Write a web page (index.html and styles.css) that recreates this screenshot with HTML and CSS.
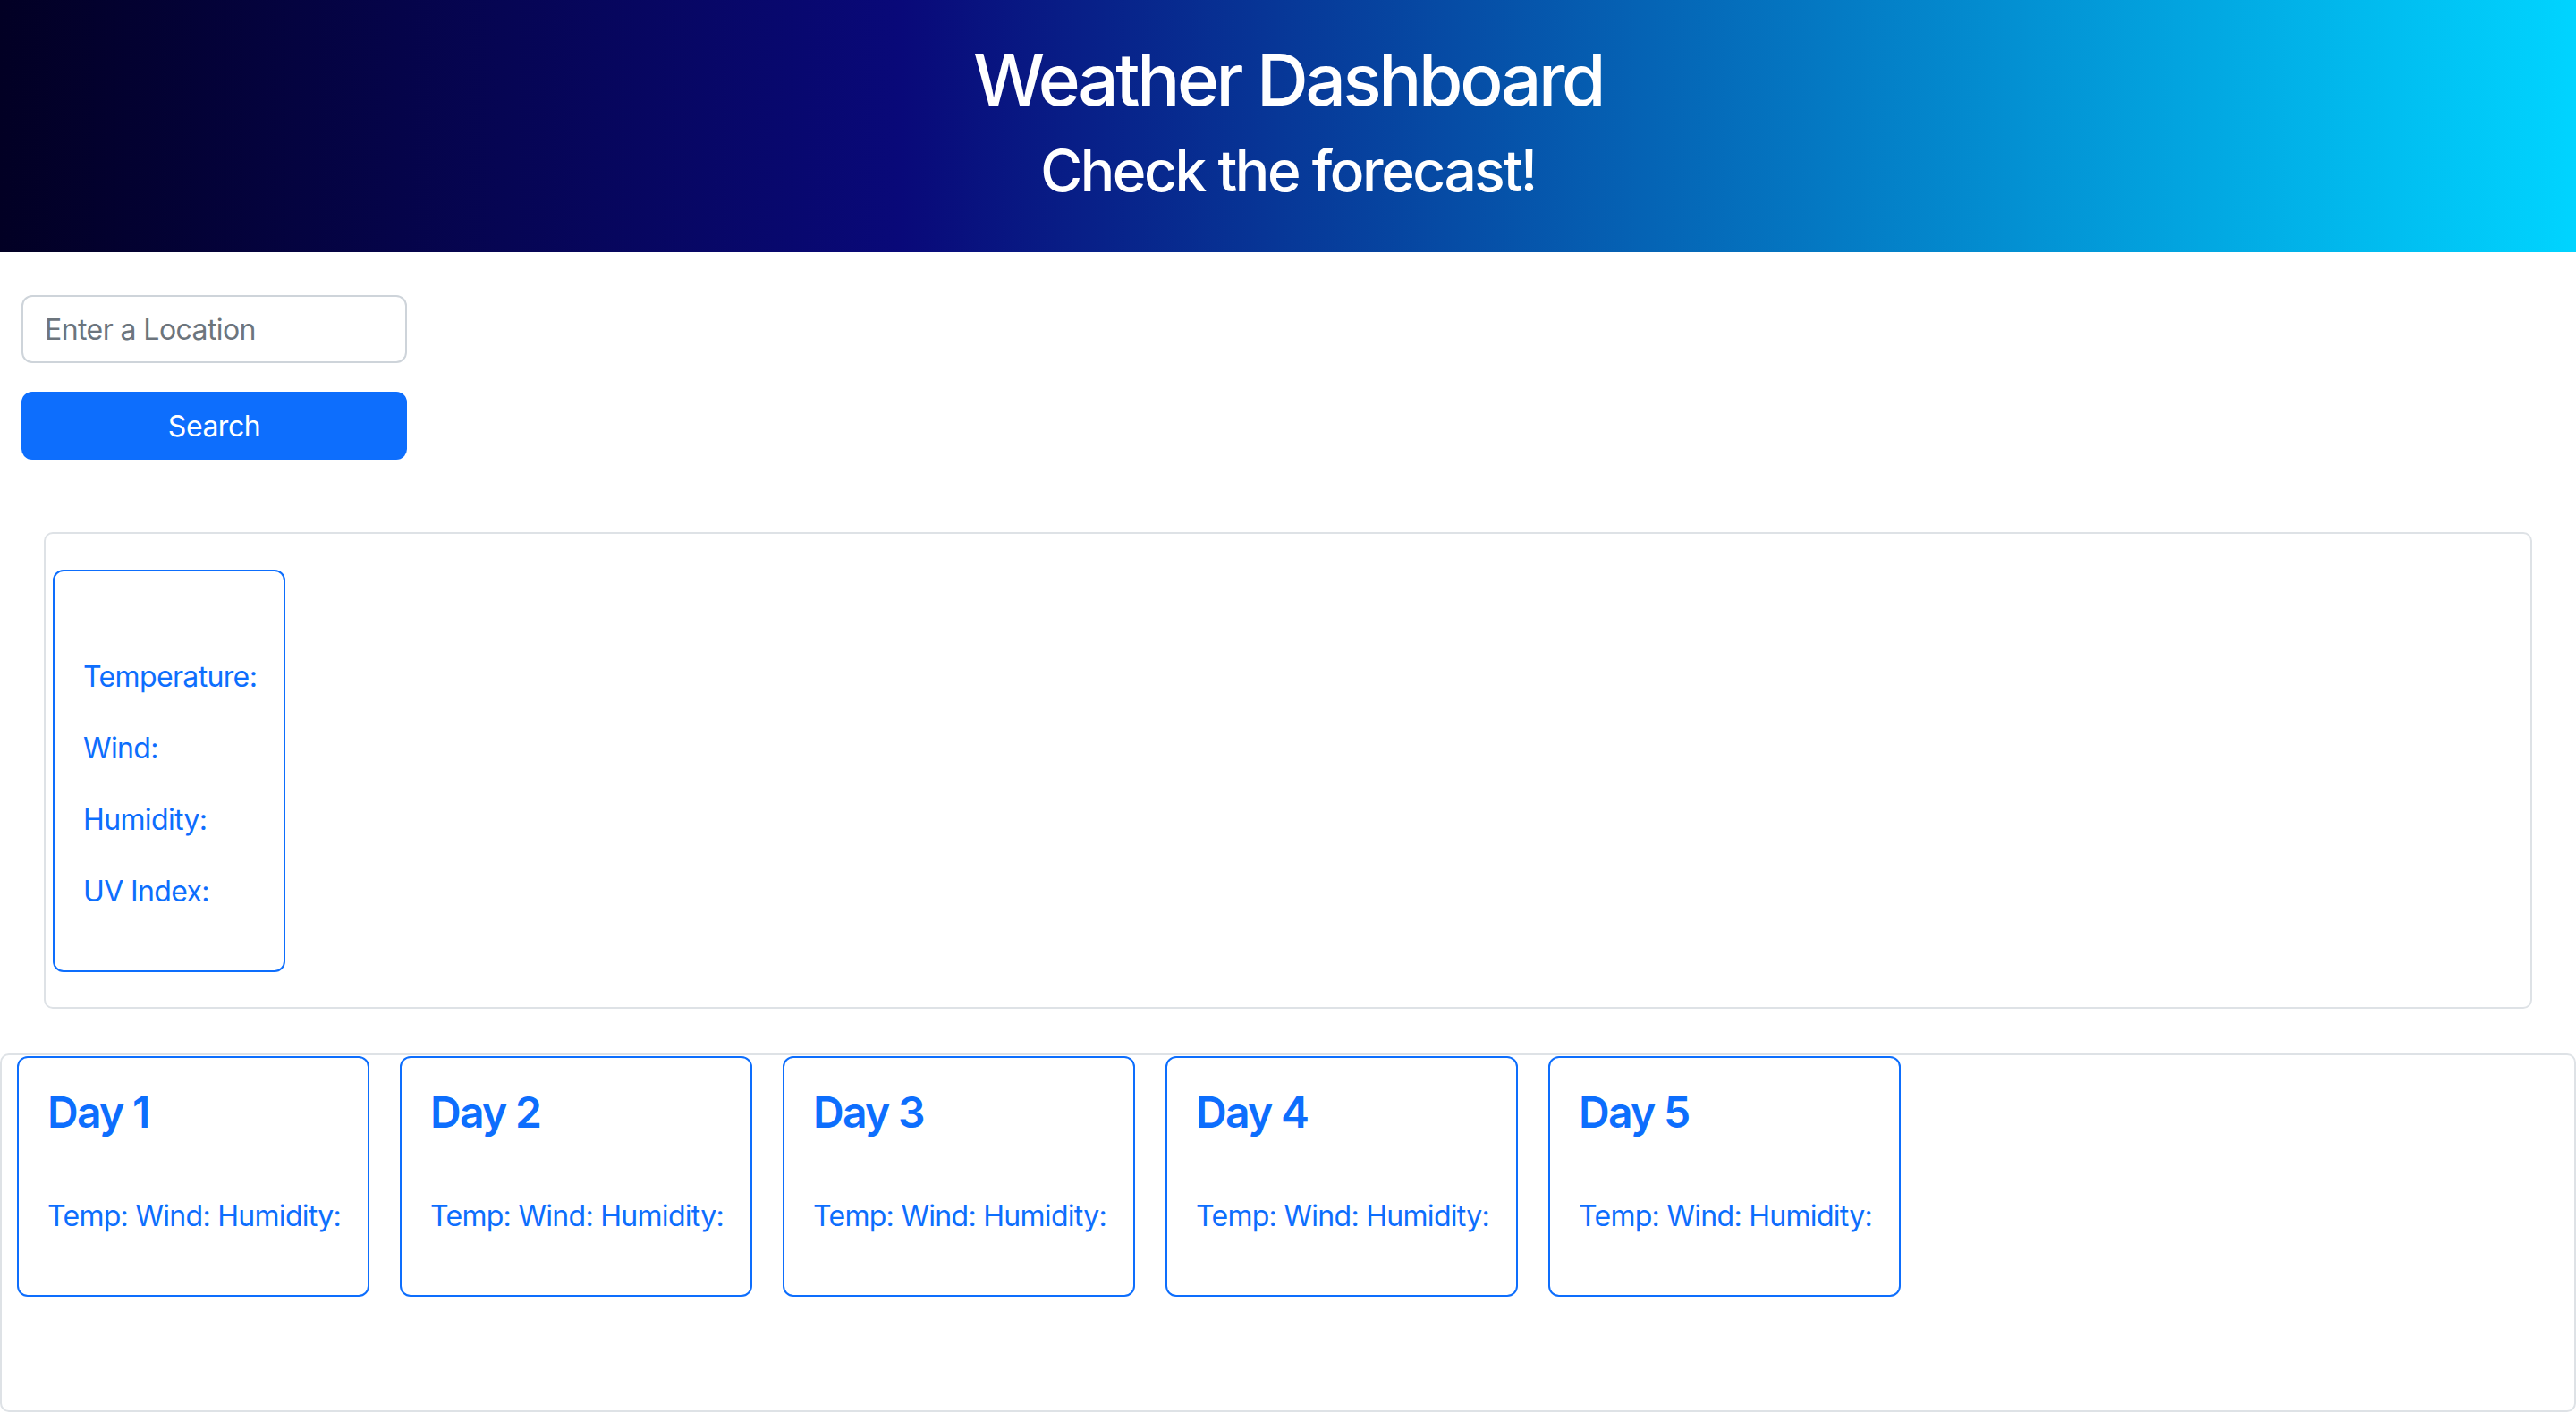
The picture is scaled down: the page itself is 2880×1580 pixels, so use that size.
FILE: index.html
```html
<!DOCTYPE html>
<html lang="en">
<head>
<meta charset="utf-8">
<title>Weather Dashboard</title>
<link rel="stylesheet" href="styles.css">
</head>
<body>
<header class="hero">
  <h1 class="hero-title">Weather Dashboard</h1>
  <h2 class="hero-subtitle">Check the forecast!</h2>
</header>

<main class="page">
  <form class="search" onsubmit="return false;">
    <input class="search-input" type="text" placeholder="Enter a Location">
    <button class="search-btn" type="submit">Search</button>
  </form>

  <section class="current">
    <div class="current-card">
      <div class="current-city"></div>
      <p class="stat">Temperature:</p>
      <p class="stat">Wind:</p>
      <p class="stat">Humidity:</p>
      <p class="stat">UV Index:</p>
    </div>
  </section>
</main>

<section class="forecast">
  <div class="day-card">
    <h4 class="day-title">Day 1</h4>
    <div class="day-icon"></div>
    <p class="day-stats">Temp: Wind: Humidity:</p>
  </div>
  <div class="day-card">
    <h4 class="day-title">Day 2</h4>
    <div class="day-icon"></div>
    <p class="day-stats">Temp: Wind: Humidity:</p>
  </div>
  <div class="day-card">
    <h4 class="day-title">Day 3</h4>
    <div class="day-icon"></div>
    <p class="day-stats">Temp: Wind: Humidity:</p>
  </div>
  <div class="day-card">
    <h4 class="day-title">Day 4</h4>
    <div class="day-icon"></div>
    <p class="day-stats">Temp: Wind: Humidity:</p>
  </div>
  <div class="day-card">
    <h4 class="day-title">Day 5</h4>
    <div class="day-icon"></div>
    <p class="day-stats">Temp: Wind: Humidity:</p>
  </div>
</section>
</body>
</html>
```

FILE: styles.css
```css
* {
  box-sizing: border-box;
}

html, body {
  margin: 0;
  padding: 0;
  background: #ffffff;
}

body {
  font-family: Inter, "Noto Sans", "Liberation Sans", sans-serif;
  color: #212529;
  font-size: 32px;
  line-height: 1.5;
  letter-spacing: -0.02em;
}

.hero {
  height: 282px;
  padding-top: 41px;
  text-align: center;
  color: #ffffff;
  background: linear-gradient(90deg, rgba(2, 0, 36, 1) 0%, rgba(9, 9, 121, 1) 35%, rgba(0, 212, 255, 1) 100%);
}

.hero-title {
  margin: 0 0 16px;
  font-size: 80px;
  font-weight: 500;
  line-height: 1.2;
  letter-spacing: -0.042em;
}

.hero-subtitle {
  margin: 0;
  font-size: 64px;
  font-weight: 500;
  line-height: 1.2;
  letter-spacing: -0.038em;
}

.page {
  padding: 0 24px;
}

.search {
  display: flex;
  flex-direction: column;
  gap: 32px;
  width: 431px;
  padding-top: 48px;
}

.search-input {
  height: 76px;
  padding: 0 24px;
  font-family: inherit;
  font-size: 32px;
  letter-spacing: -0.018em;
  color: #212529;
  border: 2px solid #ced4da;
  border-radius: 12px;
  background: #ffffff;
  outline: none;
}

.search-input::placeholder {
  color: #6c757d;
  opacity: 1;
}

.search-btn {
  height: 76px;
  font-family: inherit;
  font-size: 32px;
  letter-spacing: -0.015em;
  color: #ffffff;
  background: #0d6efd;
  border: 2px solid #0d6efd;
  border-radius: 12px;
}

.current {
  margin: 81px 25px 0;
  padding: 40px 8px 39px;
  border: 2px solid #dee2e6;
  border-radius: 10px;
}

.current-card {
  width: 260px;
  padding: 32px;
  border: 2px solid #0d6efd;
  border-radius: 12px;
  color: #0d6efd;
  white-space: nowrap;
}

.current-city {
  height: 62px;
}

.stat {
  margin: 0 0 32px;
  font-size: 32px;
  line-height: 48px;
}

.forecast {
  display: flex;
  gap: 34px;
  height: 401px;
  margin-top: 50px;
  padding: 1px 17px 0;
  align-items: flex-start;
  border: 2px solid #dee2e6;
  border-radius: 10px;
}

.day-card {
  width: 394px;
  flex: 0 0 394px;
  padding: 32px;
  border: 2px solid #0d6efd;
  border-radius: 12px;
  color: #0d6efd;
  white-space: nowrap;
}

.day-title {
  margin: 0 0 16px;
  font-size: 48px;
  font-weight: 600;
  line-height: 1.2;
  letter-spacing: -0.035em;
}

.day-icon {
  height: 47px;
}

.day-stats {
  margin: 0 0 32px;
  font-size: 32px;
  line-height: 48px;
  letter-spacing: -0.022em;
}
```
